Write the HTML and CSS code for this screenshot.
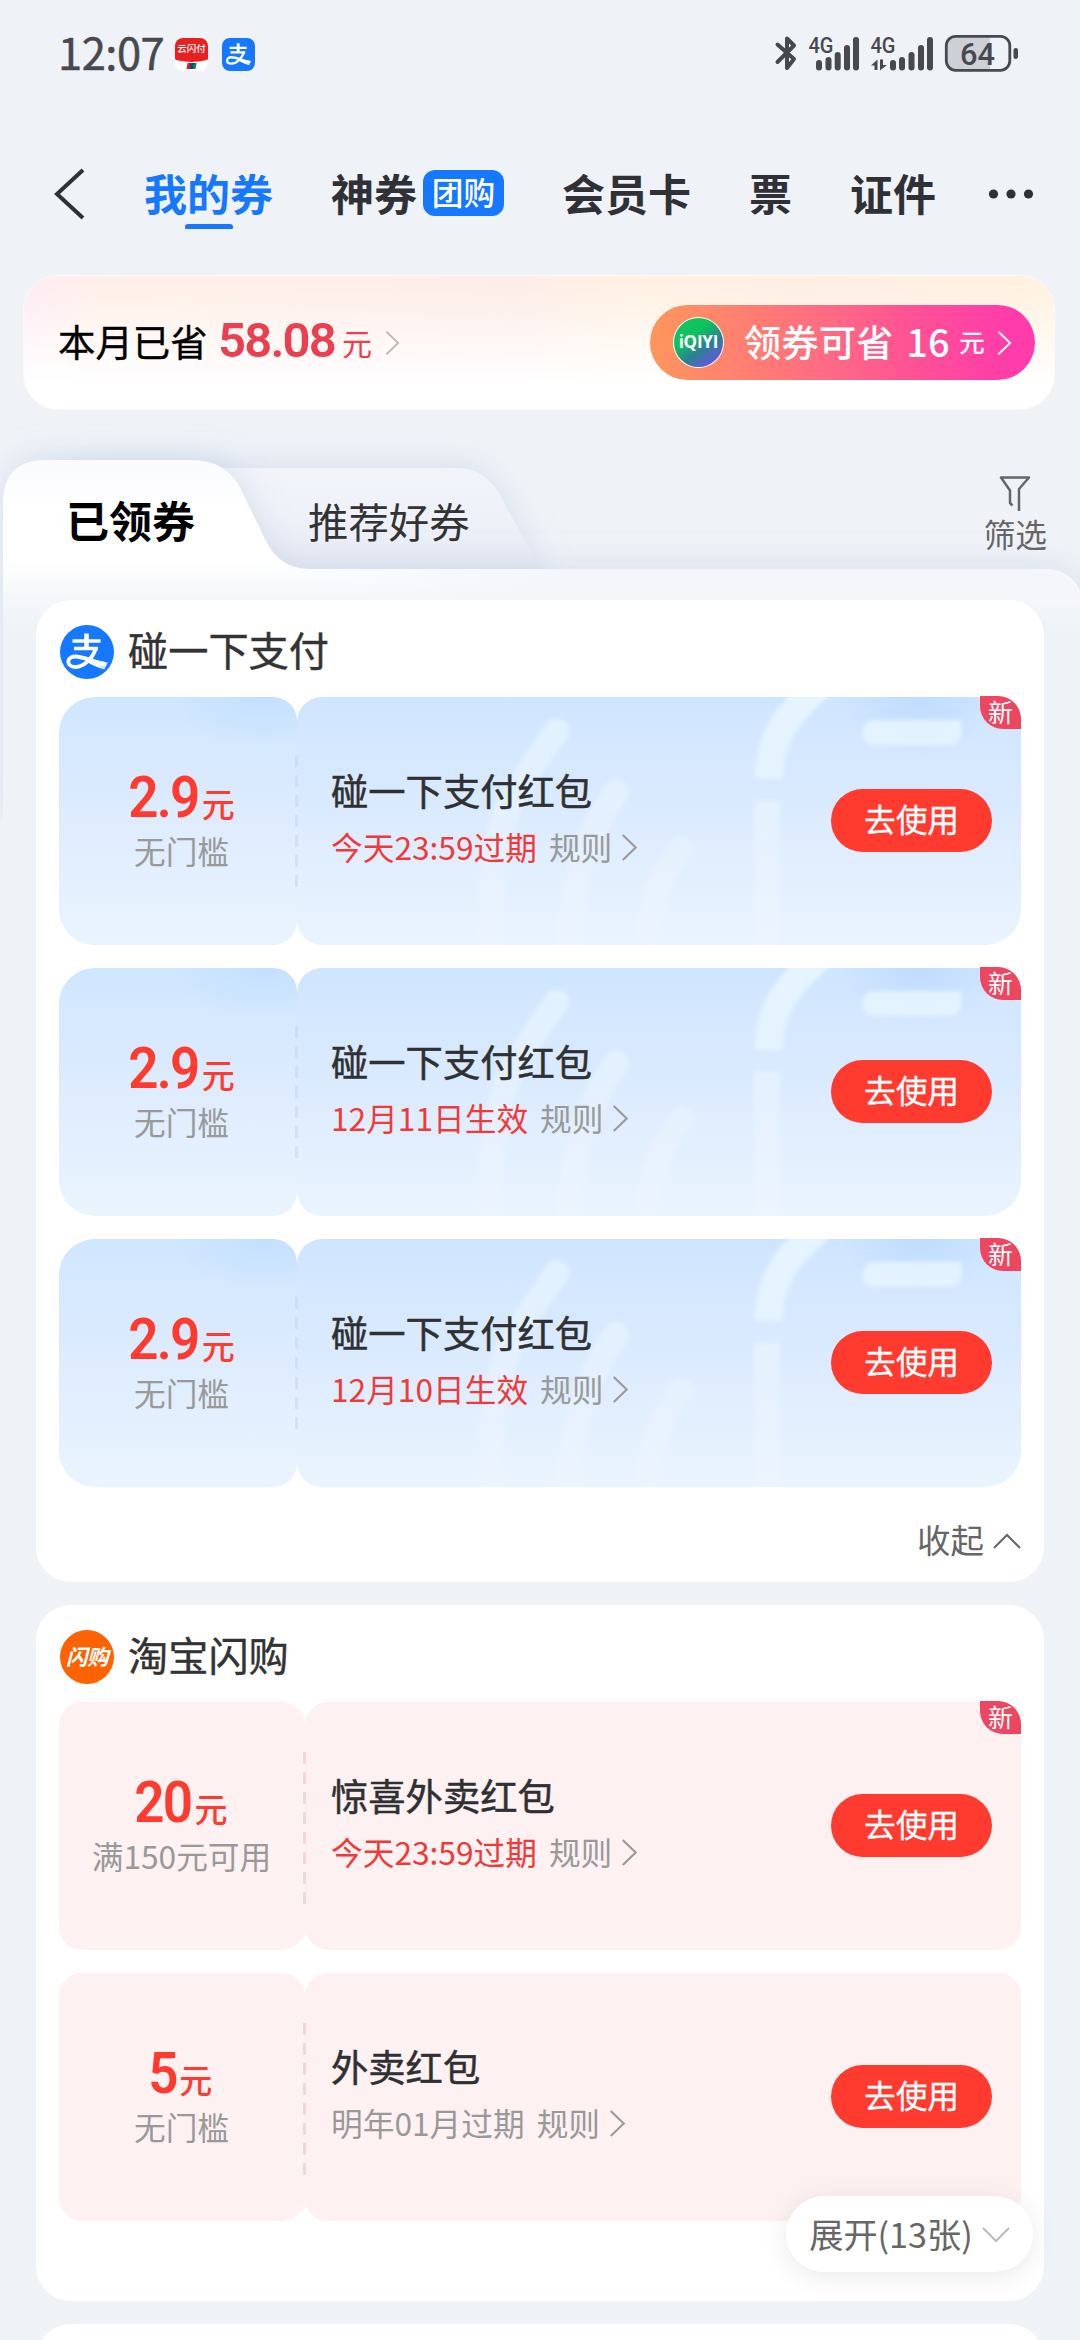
FILE: index.html
```html
<!DOCTYPE html>
<html lang="zh-CN">
<head>
<meta charset="utf-8">
<title>我的券</title>
<link rel="stylesheet" href="styles.css">
</head>
<body>
<svg class="defs" width="0" height="0" aria-hidden="true">
  <defs>
    <linearGradient id="tail" x1="0" x2="1" y1="0" y2="0"><stop offset=".5" stop-color="#fff"/><stop offset="1" stop-color="#fff" stop-opacity=".6"/></linearGradient>
    <linearGradient id="fadeDown" gradientUnits="userSpaceOnUse" x1="0" y1="0" x2="0" y2="248"><stop offset="0" stop-color="#e9f7ff" stop-opacity=".95"/><stop offset="1" stop-color="#f2f6ff" stop-opacity=".35"/></linearGradient>
    <filter id="soft" x="-10%" y="-10%" width="120%" height="120%"><feGaussianBlur stdDeviation="2"/></filter>
    <symbol id="zhi" viewBox="0 0 54 54">
      <g fill="none" stroke="#fff">
        <path d="M12.500 16H40.500" stroke-width="3.600"/><path d="M26.500 8.500V24" stroke-width="4.600"/><path d="M14 23.500H38" stroke-width="3.400"/>
        <path d="M36 23.500C32 34 24 42 15.500 42C6 42 6 31.500 15 31.500C24 31.500 33 37 46 39.500" stroke-width="3.800"/>
      </g>
      <path d="M28 33.500L48 37.500L44.500 44.500C38 43 32 40 26 36.500Z" fill="url(#tail)"/>
    </symbol>
    <symbol id="right" viewBox="0 0 16 26"><path d="M1.500 1L14 13L1.500 25" fill="none" stroke="currentColor" stroke-width="2"/></symbol>
    <symbol id="waves" viewBox="0 0 962 248">
      <g fill="none" stroke="url(#fadeDown)" stroke-width="25" stroke-linecap="round" filter="url(#soft)">
        <path d="M498 34C460 85 438 120 433 180L432 262" stroke-opacity=".75"/>
        <path d="M557 95C530 135 512 180 509 262" stroke-opacity=".75"/>
        <path d="M622 152C600 180 592 205 590 236" stroke-opacity=".75"/>
        <path d="M762 -12C726 18 711 42 709 82" stroke-width="28" stroke-linecap="butt" stroke-opacity=".9"/>
        <path d="M708 104V260" stroke-linecap="butt" stroke-opacity=".85"/>
        <path d="M816 35.500H890L890 35.600" stroke-opacity=".9"/>
      </g>
    </symbol>
  </defs>
</svg>

<div class="screen">
  <header class="status">
    <span class="time">12:07</span>
    <span class="app app-union"><span class="union-red">云闪付</span><i></i></span>
    <svg class="app app-ali"><use href="#zhi"/></svg>
    <svg class="system" width="245" height="40" viewBox="774 34 245 40">
      <g fill="none" stroke="#47494f" stroke-width="4" stroke-linejoin="round" stroke-linecap="round">
        <path d="M777.500 44.500L794 59L787 68V38.500L794 45.500L777.500 62"/>
      </g>
      <g fill="#47494f">
        <rect x="816" y="60" width="6" height="10.500" rx="3"/><rect x="825.500" y="57" width="6" height="13.500" rx="3"/><rect x="834.700" y="52" width="6" height="18.500" rx="3"/><rect x="844" y="45" width="6" height="25.500" rx="3"/><rect x="853" y="37" width="6" height="33.500" rx="3"/>
        <rect x="890" y="60" width="6" height="10.500" rx="3"/><rect x="899" y="57" width="6" height="13.500" rx="3"/><rect x="908.500" y="52" width="6" height="18.500" rx="3"/><rect x="918" y="45" width="6" height="25.500" rx="3"/><rect x="927" y="37" width="6" height="33.500" rx="3"/>
        <path d="M871 65.500L877.500 59.500V70H874.500V65.500ZM880 59.500H883V65H887L880 70.500Z"/>
        <rect x="1013.500" y="48" width="4.500" height="11" rx="2.200"/>
      </g>
      <path d="M990 37H955Q947 37 947 45V61Q947 70 955 70H990Z" fill="#cdd0d6"/>
      <rect x="946.300" y="36.300" width="63.500" height="34" rx="9.500" fill="none" stroke="#47494f" stroke-width="2.800"/>
      <g class="sys-text" fill="#47494f">
        <text x="808.500" y="53" font-size="22" textLength="25" lengthAdjust="spacingAndGlyphs">4G</text>
        <text x="870.500" y="53" font-size="22" textLength="25" lengthAdjust="spacingAndGlyphs">4G</text>
        <text x="960" y="64.500" font-size="32" textLength="35" lengthAdjust="spacingAndGlyphs">64</text>
      </g>
    </svg>
  </header>

  <nav class="nav">
    <svg class="back" width="32" height="52" viewBox="0 0 32 52"><path d="M30 2L4 26L30 50" fill="none" stroke="#303136" stroke-width="4"/></svg>
    <a class="nav-item active">我的券</a>
    <a class="nav-item deals">神券<span class="tag">团购</span></a>
    <a class="nav-item member">会员卡</a>
    <a class="nav-item ticket">票</a>
    <a class="nav-item">证件</a>
    <svg class="more" width="46" height="10" viewBox="0 0 46 10"><g fill="#303136"><circle cx="5.500" cy="5" r="4.600"/><circle cx="23" cy="5" r="4.600"/><circle cx="40.500" cy="5" r="4.600"/></g></svg>
  </nav>

  <section class="banner">
    <span class="saved">本月已省</span>
    <span class="saved-num">58.08</span>
    <span class="saved-unit">元</span>
    <svg class="saved-arrow" width="15" height="26"><use href="#right"/></svg>
    <a class="pill">
      <span class="iqiyi">iQIYI</span>
      <span class="pill-text">领券可省</span>
      <span class="pill-num">16</span>
      <span class="pill-unit">元</span>
      <svg width="15" height="26"><use href="#right"/></svg>
    </a>
  </section>

  <section class="tabs">
    <svg class="tab-shapes" width="1080" height="460" viewBox="0 410 1080 460">
      <defs>
        <linearGradient id="front" gradientUnits="userSpaceOnUse" x1="0" y1="460" x2="0" y2="630"><stop offset="0" stop-color="#fafbfe"/><stop offset=".3" stop-color="#fff"/><stop offset=".58" stop-color="#fff"/><stop offset=".9" stop-color="#f1f4f9"/><stop offset="1" stop-color="#eff3f8"/></linearGradient>
        <linearGradient id="rear" gradientUnits="userSpaceOnUse" x1="0" y1="468" x2="0" y2="569"><stop offset="0" stop-color="#f1f4f9"/><stop offset=".5" stop-color="#eef1f8"/><stop offset="1" stop-color="#e6eaf4"/></linearGradient>
        <linearGradient id="side" gradientUnits="userSpaceOnUse" x1="300" y1="0" x2="560" y2="0"><stop offset="0" stop-color="#f4f6fb" stop-opacity="0"/><stop offset="1" stop-color="#f4f6fb"/></linearGradient>
        <filter id="glow" filterUnits="userSpaceOnUse" x="-60" y="400" width="1200" height="520"><feDropShadow dx="0" dy="-3" stdDeviation="16" flood-color="#a9b6d4" flood-opacity=".34"/></filter>
      </defs>
      <g filter="url(#glow)">
        <path d="M40 569V510Q60 468 100 468H455C482 468 496 483 508 510L536 560Q541 568 550 572Z" fill="url(#rear)"/>
      </g>
      <g filter="url(#glow)">
        <path d="M3 820V503Q3 460 46 460H190C220 460 235 473 246 500L262 533C273 557 285 569 312 569H1046Q1076 570 1084 602V820Z" fill="url(#front)"/>
      </g>
      <path d="M312 569H1046Q1072 570 1081 600H312Z" fill="url(#side)"/>
      <path d="M3 628H1080V870H3Z" fill="#eff3f8"/>
      <path d="M0 820H3V870H0Z" fill="#eff3f8"/>
    </svg>
    <a class="tab on">已领券</a>
    <a class="tab">推荐好券</a>
    <a class="filter">
      <svg width="32" height="36" viewBox="0 0 32 36"><path d="M13.500 29.500L11 27V14.500L2 1.500H30L20 13V35" fill="none" stroke="#666" stroke-width="2.500" stroke-linejoin="round"/></svg>
      <span>筛选</span>
    </a>
  </section>

  <main class="list">
    <section class="card">
      <h2 class="brand"><svg class="logo ali"><use href="#zhi"/></svg><span>碰一下支付</span></h2>
      <div class="coupons">
        <article class="coupon blue">
          <svg class="deco"><use href="#waves"/></svg>
          <div class="value"><p class="amount"><b>2.9</b>元</p><p class="cond">无门槛</p></div>
          <div class="info"><h3>碰一下支付红包</h3><p class="meta"><em>今天23:59过期</em><span>规则</span><svg width="17" height="27"><use href="#right"/></svg></p></div>
          <a class="use">去使用</a><span class="new">新</span>
        </article>
        <article class="coupon blue">
          <svg class="deco"><use href="#waves"/></svg>
          <div class="value"><p class="amount"><b>2.9</b>元</p><p class="cond">无门槛</p></div>
          <div class="info"><h3>碰一下支付红包</h3><p class="meta"><em>12月11日生效</em><span>规则</span><svg width="17" height="27"><use href="#right"/></svg></p></div>
          <a class="use">去使用</a><span class="new">新</span>
        </article>
        <article class="coupon blue">
          <svg class="deco"><use href="#waves"/></svg>
          <div class="value"><p class="amount"><b>2.9</b>元</p><p class="cond">无门槛</p></div>
          <div class="info"><h3>碰一下支付红包</h3><p class="meta"><em>12月10日生效</em><span>规则</span><svg width="17" height="27"><use href="#right"/></svg></p></div>
          <a class="use">去使用</a><span class="new">新</span>
        </article>
      </div>
      <a class="fold"><span>收起</span><svg width="28" height="16" viewBox="0 0 28 16"><path d="M1 15L14 2L27 15" fill="none" stroke="#666" stroke-width="2"/></svg></a>
    </section>

    <section class="card second">
      <h2 class="brand"><i class="logo flash">闪购</i><span>淘宝闪购</span></h2>
      <div class="coupons">
        <article class="coupon pink">
          <div class="value"><p class="amount"><b>20</b>元</p><p class="cond">满150元可用</p></div>
          <div class="info"><h3>惊喜外卖红包</h3><p class="meta"><em>今天23:59过期</em><span>规则</span><svg width="17" height="27"><use href="#right"/></svg></p></div>
          <a class="use">去使用</a><span class="new">新</span>
        </article>
        <article class="coupon pink">
          <div class="value"><p class="amount"><b>5</b>元</p><p class="cond">无门槛</p></div>
          <div class="info"><h3>外卖红包</h3><p class="meta"><em class="later">明年01月过期</em><span>规则</span><svg width="17" height="27"><use href="#right"/></svg></p></div>
          <a class="use">去使用</a>
        </article>
      </div>
      <a class="expand"><span>展开(13张)</span><svg width="28" height="16" viewBox="0 0 28 16"><path d="M1 1L14 14L27 1" fill="none" stroke="#bbb" stroke-width="2"/></svg></a>
    </section>

    <section class="card next"></section>
  </main>
</div>
</body>
</html>
```
FILE: styles.css
```css
* { box-sizing: border-box; margin: 0; padding: 0; }
html, body { width: 1080px; height: 2340px; overflow: hidden; }
body { background: #eff3f8; color: #333; font-family: "Noto Sans CJK SC", "Noto Sans", sans-serif; }
h2, h3, em, i { font-weight: 400; font-style: normal; }
svg { display: block; flex: none; }
.defs { position: absolute; }
.screen { width: 1080px; height: 2340px; display: flex; flex-direction: column; overflow: hidden; }

/* status bar */
.status { height: 108px; flex: none; display: flex; align-items: center; padding: 0 61px 0 58px; color: #47494f; }
.time { width: 117px; font-size: 43.500px; line-height: 60px; letter-spacing: -.5px; white-space: nowrap; padding-bottom: 4px; -webkit-text-stroke: .5px #47494f; }
.app { width: 33px; height: 33px; border-radius: 8px; overflow: hidden; flex: none; }
.app-union { background: #fff; display: flex; flex-direction: column; align-items: center; }
.union-red { width: 37px; height: 24px; background: #ea2020; color: #fff; font-size: 9.500px; line-height: 20px; text-align: center; border-radius: 0 0 50% 50% / 0 0 5px 5px; font-weight: 500; }
.app-union i { width: 9px; height: 6px; margin-top: 1px; transform: skewX(-12deg); background: linear-gradient(90deg, #c8203c 35%, #134a66 35% 70%, #0a7a70 70%); }
.app-ali { background: #1677ff; margin-left: 14px; }
.system { margin-left: auto; }
.sys-text { font-family: Roboto, sans-serif; font-weight: 500; }

/* navigation */
.nav { height: 167px; flex: none; display: flex; align-items: center; padding: 5px 46px 0 53px; }
.nav-item { font-size: 43px; line-height: 60px; padding-bottom: 4px; font-weight: 700; color: #303136; display: flex; align-items: center; white-space: nowrap; }
.active { color: #1677ff; margin-left: 59px; width: 129px; flex-direction: column; position: relative; }
.active::after { content: ""; position: absolute; left: 41px; bottom: -3px; width: 48px; height: 5px; border-radius: 3px 3px 1px 1px; background: #1677ff; }
.deals { margin-left: 58px; }
.tag { width: 81px; height: 46px; margin: 2px 0 0 6px; border-radius: 12px; background: #1677ff; color: #fff; font-size: 31.700px; line-height: 42px; font-weight: 500; text-align: center; }
.member { margin-left: 58px; }
.ticket { margin-left: 58px; margin-right: 58px; }
.more { margin-left: auto; }

/* savings banner */
.banner { flex: none; height: 135px; margin: 0 25px 0 23px; padding: 0 19px 0 34px; border-radius: 35px; border: 1px solid #fff8f4; display: flex; align-items: center; background: linear-gradient(180deg, rgba(255,255,255,.1) 8%, rgba(255,255,255,.6) 50%, #fff 80%), linear-gradient(90deg, #fdeaf3 0, #ffefe6 8%, #fdebe6 48%, #fff0e0 60%, #feece0 75%, #fff0dd 100%); }
.saved { font-size: 37.400px; line-height: 54px; padding-bottom: 4px; color: #000; width: 160px; white-space: nowrap; -webkit-text-stroke: .4px #000; }
.saved-num { font-family: Roboto, sans-serif; font-size: 49px; line-height: 54px; padding-bottom: 3px; font-weight: 600; color: #e93f50; letter-spacing: -1.800px; width: 124px; }
.saved-unit { font-size: 30px; line-height: 54px; padding-bottom: 2px; color: #e93f50; width: 43px; }
.saved-arrow { color: #bbb; }
.pill { width: 385px; height: 75px; border-radius: 38px; margin-left: auto; padding: 0 23px; display: flex; align-items: center; color: #fff; background: linear-gradient(90deg, #ff965c 0, #ff6c82 45%, #ff4e98 72%, #ff3caa 94%); }
.iqiyi { width: 51px; height: 51px; border-radius: 50%; border: 1.500px solid #fff; background: linear-gradient(145deg, #14c45c 0, #0cc45c 35%, #2c7f94 62%, #5a5fd0 82%, #b050e0 100%); font: 700 17px/47px "Open Sans", sans-serif; letter-spacing: -.2px; text-align: center; }
.pill-text { margin-left: 20px; width: 163px; font-size: 37.400px; line-height: 54px; padding-bottom: 4px; font-weight: 500; white-space: nowrap; }
.pill-num { width: 53px; font-size: 38px; line-height: 54px; padding-bottom: 3px; font-weight: 500; }
.pill-unit { width: 38px; font-size: 25.500px; line-height: 54px; padding-bottom: 3px; font-weight: 500; }

/* tabs */
.tabs { flex: none; height: 190px; position: relative; display: flex; align-items: flex-start; padding: 0 33px 0 66px; }
.tab-shapes { position: absolute; left: 0; top: 0; z-index: -1; }
.tab { font-size: 40.400px; line-height: 60px; margin-top: 81px; color: #333; }
.tab.on { font-size: 43px; font-weight: 700; color: #000; width: 242px; margin-top: 79px; }
.filter { margin-left: auto; margin-top: 66px; display: flex; flex-direction: column; align-items: center; color: #666; font-size: 31.700px; line-height: 42px; }

/* coupon groups */
.list { display: flex; flex-direction: column; gap: 23px; padding: 0 36px; flex: none; }
.card { background: #fff; border-radius: 35px; height: 982px; padding: 25px 23px 0; display: flex; flex-direction: column; position: relative; }
.second { height: 696px; }
.next { height: 100px; }
.brand { height: 54px; display: flex; align-items: center; gap: 14px; font-size: 40.200px; line-height: 54px; padding-left: 1px; -webkit-text-stroke: .4px #333; }
.brand span { padding-bottom: 6px; }
.logo { width: 54px; height: 54px; border-radius: 50%; flex: none; }
.ali { background: #1677ff; }
.flash { background: #ff6200; color: #fff; font-size: 21.500px; line-height: 51px; font-weight: 700; font-style: italic; text-align: center; letter-spacing: -.5px; -webkit-text-stroke: 0; }
.coupons { display: flex; flex-direction: column; gap: 23px; margin-top: 18px; }
.coupon { height: 248px; position: relative; display: flex; align-items: flex-start; padding-right: 29px; }
.coupon > * { position: relative; }
.coupon::before, .coupon::after { content: ""; position: absolute; top: 0; bottom: 0; }
.blue::before { left: 0; width: 238px; border-radius: 36px 24px 24px 36px; background: radial-gradient(ellipse 90px 50px at 86% 0, rgba(192,222,255,.8), rgba(192,222,255,0)), linear-gradient(180deg, #d0e6ff, #deecfe 50%, #eaf4fe); }
.blue::after { left: 238px; right: 0; border-radius: 25px 22px 36px 25px; background: radial-gradient(ellipse 80px 60px at 86% 0, #c0dcff, rgba(192,222,255,0)), linear-gradient(180deg, #cfe5ff, #dcebfe 50%, #eaf4fe); z-index: 0; }
.coupon > .deco { position: absolute; left: 0; top: 0; width: 962px; height: 248px; z-index: 1; overflow: hidden; }
.pink::before { left: 0; width: 245.500px; border-radius: 23px; background: #fef1f2; }
.pink::after { left: 245.500px; right: 0; border-radius: 23px; background: #fef1f2; z-index: 0; }
.value { width: 245px; z-index: 2; display: flex; flex-direction: column; align-items: center; padding-top: 71px; }
.value::after { content: ""; position: absolute; left: 236px; top: 58px; width: 3px; height: 132px; background: repeating-linear-gradient(180deg, #c3d3ea 0 12px, transparent 12px 20px); opacity: .5; }
.pink .value::after { left: 244px; top: 50px; height: 154px; background: repeating-linear-gradient(180deg, #f5d4d8 0 12px, transparent 12px 20px); opacity: 1; }
.amount { display: flex; align-items: baseline; gap: 3px; height: 56px; font-size: 33px; line-height: 60px; font-weight: 500; color: #ff3b30; }
.amount b { font-family: Roboto, sans-serif; font-size: 57px; font-weight: 600; letter-spacing: -2px; transform: scaleX(.93); transform-origin: 100% 50%; margin-left: -5px; }
.cond { font-size: 31.700px; line-height: 40px; color: #999; margin-top: 6px; }
.info { flex: 1; z-index: 2; padding: 66px 0 0 27px; }
.info h3 { font-size: 37.300px; line-height: 54px; color: #2f3033; -webkit-text-stroke: .5px #2f3033; white-space: nowrap; }
.meta { display: flex; align-items: center; height: 44px; margin-top: 7px; font-size: 31.700px; line-height: 44px; color: #999; white-space: nowrap; }
.meta em { color: #f03a3a; margin-right: 12px; }
.meta .later { color: #999; }
.meta svg { margin: 2px 0 0 9px; }
.use { width: 161px; height: 63px; margin-top: 92px; z-index: 2; border-radius: 32px; background: #ff3b30; color: #fff; font-size: 31.700px; line-height: 59px; text-align: center; -webkit-text-stroke: .3px #fff; }
.coupon > .new { position: absolute; z-index: 3; right: 0; top: -1px; width: 41px; height: 33px; border-radius: 0 23px 0 23px; background: #ee4560; color: #fff; font-size: 25px; line-height: 30px; text-align: center; }
.fold { margin: 27px 0 0 auto; display: flex; align-items: center; gap: 9px; font-size: 33.500px; line-height: 50px; color: #666; }
.fold span, .expand span { padding-bottom: 3px; }
.expand { position: absolute; z-index: 5; right: 11px; top: 591px; width: 247px; height: 76px; border-radius: 38px; background: #fff; box-shadow: 0 4px 28px rgba(0,0,0,.09); display: flex; align-items: center; justify-content: center; gap: 9px; font-size: 34.200px; line-height: 50px; color: #666; white-space: nowrap; }
.expand svg { margin-top: 2px; }
```
